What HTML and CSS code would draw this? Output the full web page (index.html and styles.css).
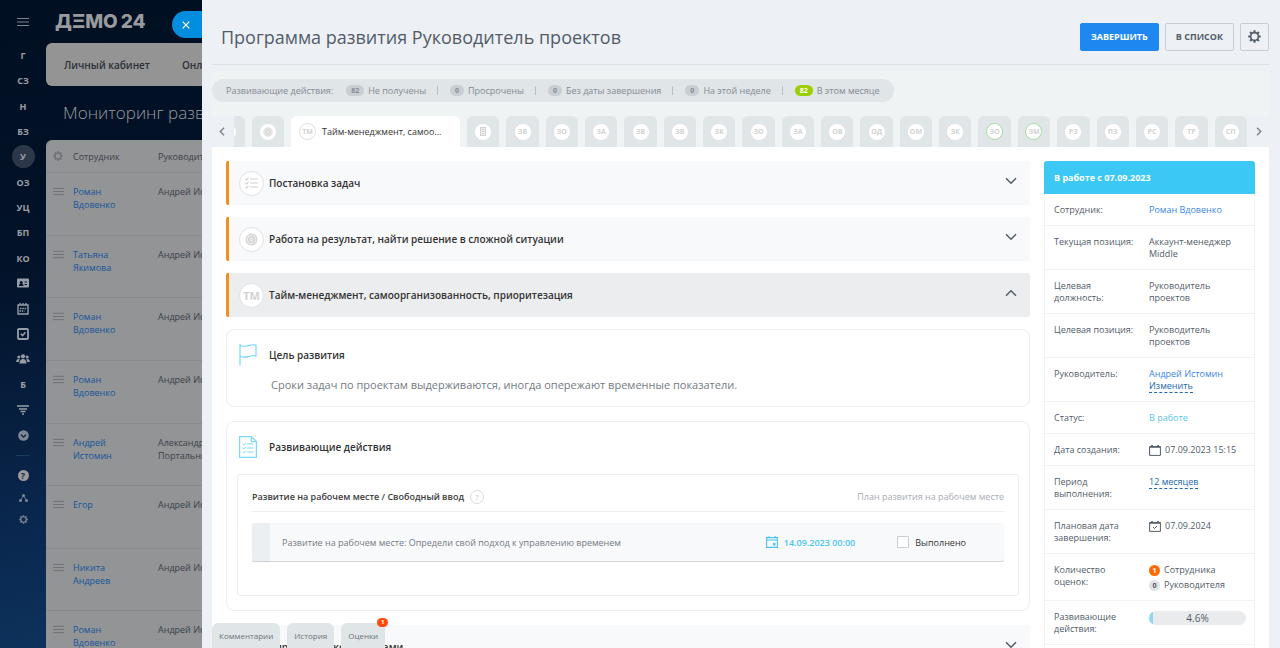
FILE: index.html
```html
<!DOCTYPE html>
<html lang="ru">
<head>
<meta charset="utf-8">
<meta name="viewport" content="width=device-width, initial-scale=1">
<title>Программа развития</title>
<link rel="stylesheet" href="styles.css">
</head>
<body>
<svg class="defs" aria-hidden="true">
  <symbol id="gear" viewBox="0 0 16 16"><circle cx="8" cy="8" r="4.800" fill="none" stroke="currentColor" stroke-width="2"/><path d="M8 .3v2.800M8 12.900v2.800M.3 8h2.800M12.900 8h2.800M2.600 2.600l2 2M11.400 11.400l2 2M13.400 2.600l-2 2M4.600 11.400l-2 2" stroke="currentColor" stroke-width="2.600" fill="none"/></symbol>
  <symbol id="burger" viewBox="0 0 12 10"><path d="M0 1.500h12M0 5h12M0 8.500h12" stroke="currentColor" stroke-width="1.100"/></symbol>
  <symbol id="down" viewBox="0 0 12 8"><path d="M1 1.200l5 5 5-5" fill="none" stroke="currentColor" stroke-width="1.500"/></symbol>
  <symbol id="target" viewBox="0 0 12 12"><circle cx="6" cy="6" r="5" fill="#ececec" stroke="currentColor" stroke-width="1"/><circle cx="6" cy="6" r="2.700" fill="none" stroke="currentColor" stroke-width="1.200"/><circle cx="6" cy="6" r=".8" fill="currentColor"/></symbol>
</svg>

<div class="page">
  <nav class="rail" aria-label="Главное меню">
    <button class="rail-burger" aria-label="Меню"><svg width="12" height="10"><use href="#burger"/></svg></button>
    <div class="rail-items">
      <a href="#">Г</a><a href="#">СЗ</a><a href="#">Н</a><a href="#">БЗ</a><a href="#" class="current">У</a><a href="#">ОЗ</a><a href="#">УЦ</a><a href="#">БП</a><a href="#">КО</a>
      <a href="#" aria-label="Контакты"><svg width="12" height="10" viewBox="0 0 12 10"><path fill="currentColor" fill-rule="evenodd" d="M1 .5h10a1 1 0 0 1 1 1v7a1 1 0 0 1-1 1H1a1 1 0 0 1-1-1v-7a1 1 0 0 1 1-1zM2 8h4.500c0-1.500-.8-2-1.300-2.200a1.500 1.500 0 1 0-1.900 0C2.800 6 2 6.500 2 8zM7.500 3.500v1H10v-1zM7.500 6v1H10V6z"/></svg></a>
      <a href="#" aria-label="Календарь"><svg width="12" height="12" viewBox="0 0 12 12"><path fill="none" stroke="currentColor" stroke-width="1.400" d="M1 2h10v9H1zM3 0v2.500M6 0v2.500M9 0v2.500"/><path d="M3 5.500h6.500M2.500 8h5" stroke="currentColor" stroke-width="1.500" stroke-dasharray="1.500 .8"/></svg></a>
      <a href="#" aria-label="Задачи"><svg width="12" height="12" viewBox="0 0 12 12"><rect x="1" y="1" width="10" height="10" rx="1" fill="none" stroke="currentColor" stroke-width="1.800"/><path d="M3.800 5.700l1.800 1.900 2.800-3.400" fill="none" stroke="currentColor" stroke-width="1.500"/></svg></a>
      <a href="#" aria-label="Группы"><svg width="14" height="10" viewBox="0 0 14 10"><g fill="currentColor"><circle cx="7" cy="2.300" r="2.100"/><path d="M3.500 9.500c0-3 1.300-4.500 3.500-4.500s3.500 1.500 3.500 4.500z"/><circle cx="2.800" cy="3" r="1.500"/><circle cx="11.200" cy="3" r="1.500"/><path d="M.2 8C.2 6 1 5 2.500 5c.6 0 1 .2 1.300.5C3 6.300 2.800 7.300 2.800 8zM13.800 8c0-2-.8-3-2.300-3-.6 0-1 .2-1.300.5.8.8 1 1.800 1 2.500z"/></g></svg></a>
      <a href="#">Б</a>
      <a href="#" aria-label="Фильтр"><svg width="12" height="10" viewBox="0 0 12 10"><path d="M0 1h12M2 4h8M3.500 6.500h5M5 9h2" stroke="currentColor" stroke-width="1.600"/></svg></a>
      <a href="#" aria-label="Ещё" class="dim"><svg width="11" height="11" viewBox="0 0 11 11"><circle cx="5.500" cy="5.500" r="5.300" fill="currentColor"/><path d="M3 4.700l2.500 2.400L8 4.700" fill="none" stroke="#0a2747" stroke-width="1.400"/></svg></a>
    </div>
    <div class="rail-tools">
      <a href="#" class="help" aria-label="Помощь">?</a>
      <a href="#" class="dim" aria-label="Структура"><svg width="9" height="8" viewBox="0 0 9 8"><path d="M4.500 1.500L1.500 6.500M4.500 1.500l3 5" stroke="currentColor" stroke-width=".8"/><g fill="currentColor"><circle cx="4.500" cy="1.500" r="1.500"/><circle cx="1.500" cy="6.500" r="1.500"/><circle cx="7.500" cy="6.500" r="1.500"/></g></svg></a>
      <a href="#" class="dim" aria-label="Настройки"><svg width="9" height="9"><use href="#gear"/></svg></a>
    </div>
  </nav>

  <div class="back">
    <div class="brand">ДΞМО<span>24</span></div>
    <div class="menu"><a href="#">Личный кабинет</a><a href="#">Онлайн</a></div>
    <h2>Мониторинг развития</h2>
    <table>
      <thead><tr><th class="ico"><svg width="10" height="10"><use href="#gear"/></svg></th><th class="who">Сотрудник</th><th>Руководитель</th></tr></thead>
      <tbody>
        <tr><td class="ico"><svg width="11" height="9"><use href="#burger"/></svg></td><td><a href="#">Роман Вдовенко</a></td><td>Андрей Истомин</td></tr>
        <tr><td class="ico"><svg width="11" height="9"><use href="#burger"/></svg></td><td><a href="#">Татьяна Якимова</a></td><td>Андрей Истомин</td></tr>
        <tr><td class="ico"><svg width="11" height="9"><use href="#burger"/></svg></td><td><a href="#">Роман Вдовенко</a></td><td>Андрей Истомин</td></tr>
        <tr><td class="ico"><svg width="11" height="9"><use href="#burger"/></svg></td><td><a href="#">Роман Вдовенко</a></td><td>Андрей Истомин</td></tr>
        <tr><td class="ico"><svg width="11" height="9"><use href="#burger"/></svg></td><td><a href="#">Андрей Истомин</a></td><td>Александр<br>Портальный</td></tr>
        <tr><td class="ico"><svg width="11" height="9"><use href="#burger"/></svg></td><td><a href="#">Егор</a></td><td>Андрей Истомин</td></tr>
        <tr><td class="ico"><svg width="11" height="9"><use href="#burger"/></svg></td><td><a href="#">Никита Андреев</a></td><td>Андрей Истомин</td></tr>
        <tr><td class="ico"><svg width="11" height="9"><use href="#burger"/></svg></td><td><a href="#">Роман Вдовенко</a></td><td>Андрей Истомин</td></tr>
      </tbody>
    </table>
  </div>
</div>

<button class="close" aria-label="Закрыть"><svg width="8" height="8" viewBox="0 0 8 8"><path d="M.7.7l6.600 6.600M7.300.7L.7 7.300" stroke="#fff" stroke-width="1.200"/></svg></button>

<main class="panel">
  <header class="top">
    <h1>Программа развития Руководитель проектов</h1>
    <button class="btn primary">ЗАВЕРШИТЬ</button>
    <button class="btn">В СПИСОК</button>
    <button class="btn square" aria-label="Настройки"><svg width="13" height="13"><use href="#gear"/></svg></button>
  </header>

  <div class="stats-area">
    <div class="stats">
      <span class="lead">Развивающие действия:</span>
      <span class="stat"><b>82</b>Не получены</span>
      <span class="stat"><b>0</b>Просрочены</span>
      <span class="stat"><b>0</b>Без даты завершения</span>
      <span class="stat"><b>0</b>На этой неделе</span>
      <span class="stat"><b class="green">82</b>В этом месяце</span>
    </div>
  </div>

  <div class="tabs">
    <button class="arrow" aria-label="Назад"><svg width="6" height="9" viewBox="0 0 6 9"><path d="M5 .8L1.300 4.500 5 8.200" fill="none" stroke="currentColor" stroke-width="1.500"/></svg></button>
    <button class="tab cut" aria-label="Предыдущая"><i></i></button>
    <button class="tab fixed" aria-label="Работа на результат"><i><svg width="10" height="10"><use href="#target"/></svg></i></button>
    <button class="tab active"><i>ТМ</i>Тайм-менеджмент, самоо...</button>
    <button class="tab" aria-label="Документ"><i><svg width="6" height="9" viewBox="0 0 6 9"><rect x=".5" y=".5" width="5" height="8" fill="#eee" stroke="currentColor"/><path d="M2 2.500h2M2 4.500h2M2 6.500h2" stroke="currentColor"/></svg></i></button>
    <button class="tab"><i>ЗВ</i></button><button class="tab"><i>ЗО</i></button><button class="tab"><i>ЗА</i></button><button class="tab"><i>ЗВ</i></button><button class="tab"><i>ЗВ</i></button><button class="tab"><i>ЗК</i></button><button class="tab"><i>ЗО</i></button><button class="tab"><i>ЗА</i></button><button class="tab"><i>ОВ</i></button><button class="tab"><i>ОД</i></button><button class="tab"><i>ОМ</i></button><button class="tab"><i>ЗК</i></button><button class="tab done"><i>ЗО</i></button><button class="tab done"><i>ЗМ</i></button><button class="tab"><i>РЗ</i></button><button class="tab"><i>ПЗ</i></button><button class="tab"><i>РС</i></button><button class="tab"><i>ТР</i></button><button class="tab"><i>СП</i></button>
    <button class="arrow next" aria-label="Вперёд"><svg width="6" height="9" viewBox="0 0 6 9"><path d="M1 .8l3.700 3.700L1 8.200" fill="none" stroke="currentColor" stroke-width="1.500"/></svg></button>
  </div>

  <div class="content">
    <section class="left">
      <button class="acc"><i><svg width="13" height="12" viewBox="0 0 13 12"><path d="M5 2h8M5 6h8M5 10h8M.5 2l1 1L3.500.8M.5 6l1 1 2-2.200M.5 10l1 1 2-2.200" fill="none" stroke="currentColor" stroke-width="1.200"/></svg></i><span>Постановка задач</span><svg class="chev" width="12" height="8"><use href="#down"/></svg></button>
      <button class="acc"><i><svg width="13" height="13"><use href="#target"/></svg></i><span>Работа на результат, найти решение в сложной ситуации</span><svg class="chev" width="12" height="8"><use href="#down"/></svg></button>
      <button class="acc open" aria-expanded="true"><i>ТМ</i><span>Тайм-менеджмент, самоорганизованность, приоритезация</span><svg class="chev" width="12" height="8"><use href="#down"/></svg></button>

      <article class="card goal">
        <h3><svg width="18" height="22" viewBox="0 0 18 22"><path d="M1 0v21.500M1 1.500c3 1.200 5 1 8 .2s5-1.400 8-.6v11c-3-.8-5-.2-8 .5s-5 .9-8-.2" fill="none" stroke="#6fd5f8" stroke-width="1.100"/></svg><span>Цель развития</span></h3>
        <p>Сроки задач по проектам выдерживаются, иногда опережают временные показатели.</p>
      </article>

      <article class="card actions">
        <h3><svg width="18" height="22" viewBox="0 0 18 22"><path d="M.6.6h11.800L17.400 5.600v15.800H.6zM12.400.6v5h5" fill="none" stroke="#7bd9f9" stroke-width="1.200"/><path d="M8 8h6.500M8 12h6.500M8 16h6.500M3.800 8l1 1 2-2M3.800 12l1 1 2-2M3.800 16l1 1 2-2" fill="none" stroke="#7bd9f9"/></svg><span>Развивающие действия</span></h3>
        <div class="inner">
          <div class="inner-head"><h4>Развитие на рабочем месте / Свободный ввод</h4><button class="hint" aria-label="Подсказка">?</button><span>План развития на рабочем месте</span></div>
          <div class="task">
            <span class="task-name">Развитие на рабочем месте: Определи свой подход к управлению временем</span>
            <span class="due"><svg width="12" height="12" viewBox="0 0 12 12"><path d="M.6 1.600h10.800v9.800H.6zM.6 4h10.800M3 0v2M9 0v2" fill="none" stroke="currentColor" stroke-width="1.100"/><path d="M7 7h2.500v2.500H7z" fill="currentColor"/></svg>14.09.2023 00:00</span>
            <label><input type="checkbox">Выполнено</label>
          </div>
        </div>
      </article>

      <button class="acc"><i><svg width="13" height="13"><use href="#target"/></svg></i><span>Управление конфликтами</span><svg class="chev" width="12" height="8"><use href="#down"/></svg></button>
    </section>

    <aside>
      <h2>В работе с 07.09.2023</h2>
      <dl>
        <div><dt>Сотрудник:</dt><dd><a href="#">Роман Вдовенко</a></dd></div>
        <div><dt>Текущая позиция:</dt><dd>Аккаунт-менеджер Middle</dd></div>
        <div><dt>Целевая должность:</dt><dd>Руководитель проектов</dd></div>
        <div><dt>Целевая позиция:</dt><dd>Руководитель проектов</dd></div>
        <div><dt>Руководитель:</dt><dd><a href="#">Андрей Истомин</a><br><a href="#" class="edit">Изменить</a></dd></div>
        <div><dt>Статус:</dt><dd class="status">В работе</dd></div>
        <div><dt>Дата создания:</dt><dd class="line"><svg width="12" height="11" viewBox="0 0 12 11"><path d="M.6 1.600h10.800v8.800H.6z" fill="none" stroke="#525c69"/><path d="M.6 2h10.800M3 0v2M9 0v2" stroke="#525c69" stroke-width="1.600"/></svg>07.09.2023 15:15</dd></div>
        <div><dt>Период выполнения:</dt><dd><a href="#" class="edit">12 месяцев</a></dd></div>
        <div><dt>Плановая дата завершения:</dt><dd class="line"><svg width="12" height="11" viewBox="0 0 12 11"><path d="M.6 1.600h10.800v8.800H.6zM4 6l1.500 1.500L8 5" fill="none" stroke="#525c69"/><path d="M.6 2h10.800M3 0v2M9 0v2" stroke="#525c69" stroke-width="1.600"/></svg>07.09.2024</dd></div>
        <div class="marks"><dt>Количество оценок:</dt><dd><span class="line"><b class="hot">1</b>Сотрудника</span><span class="line"><b>0</b>Руководителя</span></dd></div>
        <div><dt>Развивающие действия:</dt><dd><div class="progress"><i style="width:4.6%"></i><span>4.6%</span></div></dd></div>
        <div><dt></dt><dd></dd></div>
      </dl>
    </aside>
  </div>

  <div class="dock">
    <button>Комментарии</button><button>История</button><button>Оценки<b>1</b></button>
  </div>
</main>
</body>
</html>
```
FILE: styles.css
```css
* { box-sizing: border-box; }
body, h1, h2, h3, h4, p, dl, dd { margin: 0; }
body { height: 100vh; overflow: hidden; font-family: "Open Sans", "Noto Sans", sans-serif; font-size: 9px; color: #525c69; }
button { font: inherit; color: inherit; border: 0; padding: 0; background: none; cursor: pointer; }
a { color: inherit; text-decoration: none; }
i { font-style: normal; }
svg { display: block; flex: none; }
.defs { position: absolute; width: 0; height: 0; }

.page { display: flex; height: 100vh; overflow: hidden; background: linear-gradient(170deg, #010f22 0%, #021228 30%, #0a2850 62%, #0f3d66 88%, #0b365e 100%); }

.rail { width: 46px; flex: none; color: #989ea6; display: flex; flex-direction: column; align-items: center; }
.rail-burger { height: 43px; color: #7f858d; }
.rail a { display: flex; align-items: center; justify-content: center; font-size: 9px; font-weight: 700; }
.rail-items { height: 405px; display: grid; grid-auto-rows: 1fr; width: 23px; }
.rail .current { width: 23px; height: 23px; align-self: center; border-radius: 50%; background: #2c3849; }
.rail .dim { color: #7e8894; }
.rail-tools { display: flex; flex-direction: column; align-items: center; gap: 13px; margin-top: 7px; padding-top: 14px; border-top: 1px solid #1b3b60; width: 14px; }
.rail .help { width: 11px; height: 11px; border-radius: 50%; background: #9b9b9b; color: #0a2747; font-size: 9px; }

.back { flex: 1; min-width: 0; }
.brand { display: flex; gap: 3px; height: 43px; padding-left: 9px; align-items: center; font-family: Inter, sans-serif; font-size: 19px; font-weight: 800; color: #989a9d; }
.menu { display: flex; align-items: center; gap: 32px; height: 43px; padding-left: 18px; border-radius: 6px; background: #949494; color: #2b3038; font-size: 10px; font-weight: 600; }
.back h2 { height: 54px; line-height: 54px; padding-left: 17px; font-size: 17px; font-weight: 300; color: #989ba0; }
.back table { width: 100%; height: 534px; table-layout: fixed; border-collapse: separate; border-spacing: 0; background: #929496; border-radius: 6px 0 0; font-size: 9px; line-height: 13px; }
.back th { height: 33px; padding: 0; text-align: left; font-weight: 400; border-bottom: 1px solid #888a8c; color: #3c4148; }
.back td { height: 62px; padding: 12px 0 0; vertical-align: top; border-bottom: 1px solid #888a8c; color: #3c4148; }
.back th.ico, .back td.ico { width: 27px; padding-left: 7px; color: #6d7074; }
.back td.ico { padding-top: 14px; }
.back .who { width: 85px; }
.back td a { display: block; width: 50px; color: #17549a; }

.close { position: fixed; left: 172px; top: 11px; width: 40px; height: 27px; padding-left: 10px; border-radius: 14px 0 0 14px; background: #028ddf; }
.panel { position: fixed; left: 202px; right: 0; top: 0; bottom: 0; padding: 0 11px 0 10px; overflow: hidden; background: #edf1f5; }

.top { display: flex; align-items: center; gap: 6px; height: 65px; padding: 9px 0 0 9px; border-bottom: 1px solid #dde2e6; }
.top h1 { flex: 1; font-size: 18px; font-weight: 400; color: #525c69; }
.btn { height: 28px; padding: 0 10px; border: 1px solid #c6cdd3; border-radius: 2px; font-size: 9px; font-weight: 700; }
.btn.primary { background: #1e87f0; border-color: #1e87f0; color: #fff; }
.btn.square { width: 29px; padding: 0 7px; }

.stats-area { margin-top: 6px; padding: 8px 0 14px; background: #eff3f4; }
.stats { display: inline-flex; align-items: center; height: 23px; padding: 0 14px; border-radius: 12px; background: #e0e5e7; color: #828b95; font-size: 9px; vertical-align: top; }
.lead { margin-right: 13px; }
.stat { display: flex; align-items: center; gap: 4px; }
.stat + .stat::before { content: ""; width: 1px; height: 9px; margin: 0 8px 0 11px; background: #b9bfc5; }
.stat b { min-width: 14px; height: 11px; padding: 0 5px; border-radius: 6px; background: #c8ced2; font-size: 7px; line-height: 11px; text-align: center; }
.stat b.green { background: #9dcf00; color: #fff; }

.tabs { display: flex; gap: 7px; height: 31px; background: #eff3f4; }
.arrow { width: 22px; padding-left: 7px; margin-right: -7px; background: #edf1f5; color: #80868e; }
.arrow.next { margin: 0 0 0 -7px; padding-left: 9px; }
.tab { flex: 1 1 0; min-width: 0; display: flex; align-items: center; justify-content: center; border-radius: 6px 6px 0 0; background: #e0e5e7; }
.tab i { flex: none; display: flex; align-items: center; justify-content: center; width: 16px; height: 16px; border-radius: 50%; background: #fff; color: #d2d2d2; font-size: 7px; font-weight: 700; }
.tab.cut { flex: none; width: 11px; overflow: hidden; justify-content: flex-end; padding-right: 9px; border-radius: 0 6px 0 0; }
.tab.fixed { flex: none; width: 32px; }
.tab.active { flex: none; width: 169px; padding-left: 8px; gap: 6px; justify-content: flex-start; background: #fff; color: #333; font-size: 9px; white-space: nowrap; }
.tab.active i { width: 17px; height: 17px; border: 1px solid #dedede; }
.tab.done i { width: 17px; height: 17px; border: 1px solid #a5dba0; }

.content { display: flex; gap: 14px; padding: 14px; background: #fff; }
.left { flex: 1; min-width: 0; display: flex; flex-direction: column; }
.acc { display: flex; align-items: center; gap: 5px; height: 44px; margin-bottom: 12px; padding: 0 13px 0 10px; border-left: 3px solid #f78c1f; border-radius: 2px; background: #f8f9fb; color: #333; text-align: left; font-size: 10px; font-weight: 600; }
.acc i { display: flex; align-items: center; justify-content: center; width: 25px; height: 25px; border: 1px solid #e2e2e2; border-radius: 50%; background: #fff; color: #d2d2d2; font-size: 11px; font-weight: 700; }
.acc span { flex: 1; }
.acc .chev { color: #525c69; margin-bottom: 4px; }
.acc.open { background: #ebedef; }
.acc.open .chev { transform: rotate(180deg); }

.card { border: 1px solid #eceeef; border-radius: 8px; margin-bottom: 14px; }
.card h3 { display: flex; align-items: center; gap: 12px; padding-left: 12px; font-size: 10px; font-weight: 600; color: #333; }
.goal { height: 78px; padding-top: 14px; }
.goal p { padding: 11px 0 0 44px; font-size: 11px; line-height: 16px; color: #747b83; }
.actions { padding: 14px 10px 14px; }
.actions h3 { padding-left: 2px; }
.inner { min-height: 122px; margin-top: 16px; padding: 11px 14px 34px; border: 1px solid #eceeef; border-radius: 3px; }
.inner-head { display: flex; align-items: center; gap: 6px; height: 26px; padding-bottom: 4px; border-bottom: 1px solid #eceeef; }
.inner-head h4 { font-size: 9px; font-weight: 600; color: #3d3d3d; }
.inner-head span { margin-left: auto; color: #a8adb4; }
.hint { width: 14px; height: 14px; border: 1px solid #dcdcdc; border-radius: 50%; color: #c8c8c8; line-height: 12px; font-size: 8px; }
.task { display: flex; align-items: center; height: 38px; margin-top: 11px; padding: 0 38px 0 12px; border-left: 18px solid #ebeff2; border-radius: 2px; background: #f8f9fb; box-shadow: 0 1px 1px #cfd2d4; }
.task-name { flex: 1; color: #747b83; }
.due { display: flex; align-items: center; gap: 6px; margin-right: 42px; color: #4cc5ee; font-weight: 600; }
.task label { display: flex; align-items: center; gap: 6px; color: #333; }
.task input { appearance: none; width: 12px; height: 12px; margin: 0; border: 1px solid #c6cdd3; border-radius: 1px; background: #fff; }

aside { width: 211px; flex: none; }
aside h2 { height: 33px; padding-left: 10px; border-radius: 3px 3px 0 0; background: #3bc8f5; color: #fff; font-size: 9px; line-height: 33px; font-weight: 700; }
aside dl { border: 1px solid #f0f2f4; border-top: 0; font-size: 9px; line-height: 12px; }
aside dl > div { display: flex; padding: 10px 8px 9px 9px; min-height: 32px; border-bottom: 1px solid #f0f2f4; }
aside dt { width: 95px; padding-right: 12px; flex: none; }
aside dd { flex: 1; }
aside dd a { color: #3a86ea; }
aside dd .edit { color: #2067b0; border-bottom: 1px dashed #2067b0; }
aside .status { color: #55c5f0; }
.line { display: flex; align-items: center; gap: 4px; height: 12px; }
.marks .line + .line { margin-top: 3px; }
.line b { width: 11px; height: 11px; border-radius: 50%; background: #dfe3e7; font-size: 7px; line-height: 11px; text-align: center; }
.line b.hot { background: #ff6a00; color: #fff; }
.progress { position: relative; display: flex; height: 14px; border-radius: 7px; overflow: hidden; background: #e9ebed; font-size: 10px; line-height: 14px; }
.progress i { background: #8fd6f2; }
.progress span { position: absolute; inset: 0; text-align: center; }

.dock { position: absolute; left: 10px; bottom: 0; display: flex; gap: 7px; }
.dock button { position: relative; height: 25px; padding: 0 7px; border-radius: 6px 6px 0 0; background: #e0e5e7; color: #6b737c; font-size: 8px; }
.dock b { position: absolute; right: -3px; top: -5px; width: 11px; height: 9px; border-radius: 5px; background: #ff4a12; color: #fff; font-size: 6px; line-height: 9px; text-align: center; }
```
